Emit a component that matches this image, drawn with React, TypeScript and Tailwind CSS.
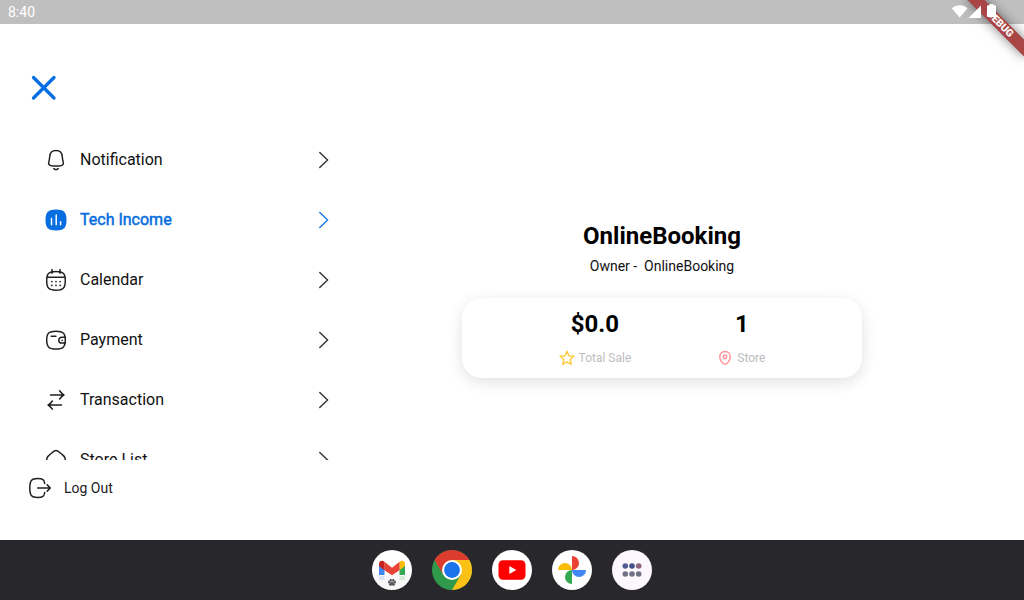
import type { ReactNode } from 'react';

const iconProps = {
  width: 24,
  height: 24,
  viewBox: '0 0 24 24',
  fill: 'none',
  stroke: 'currentColor',
  strokeWidth: 1.5,
  strokeLinecap: 'round' as const,
  strokeLinejoin: 'round' as const,
};

const BellIcon = () => (
  <svg {...iconProps}>
    <path d="M12 2.600C8.200 2.600 5.900 5.300 5.700 8.800c-.1 2.400-.4 3.400-.8 4.600-.4 1.300-.5 2.500.3 3.300 1.100 1.100 3.700 1.400 6.800 1.400s5.700-.3 6.800-1.400c.8-.8.700-2 .3-3.300-.4-1.200-.7-2.200-.8-4.600-.2-3.500-2.500-6.200-6.300-6.200z" />
    <path d="M9.700 20.700c1.200 1 3.400 1 4.600 0" />
  </svg>
);

const ChartIcon = () => (
  <svg {...iconProps}>
    <path
      d="M12 1.500c7.800 0 10.500 2.700 10.500 10.500S19.800 22.500 12 22.500 1.500 19.800 1.500 12 4.200 1.500 12 1.500z"
      fill="currentColor"
      stroke="none"
    />
    <path d="M7.500 10.400v6.400M12.200 7v9.800M16.600 13.800v3" stroke="white" strokeWidth={1.5} />
  </svg>
);

const CalendarIcon = () => (
  <svg {...iconProps}>
    <path d="M12 3.400c7 0 9.300 2 9.300 9.300S19 22.200 12 22.200s-9.300-2-9.300-9.500S5 3.400 12 3.400z" />
    <path d="M3 9.300h18M8 1.600v3.600M16 1.600v3.600" />
    <path d="M7.900 13.600h.01M12 13.600h.01M16.100 13.600h.01M7.900 17.400h.01M12 17.400h.01M16.100 17.400h.01" strokeWidth={1.7} />
  </svg>
);

const WalletIcon = () => (
  <svg {...iconProps}>
    <path d="M12 3.200c7 0 9.300 1.900 9.300 8.900S19 21 12 21s-9.300-1.900-9.300-8.900S5 3.200 12 3.200z" />
    <path d="M21.300 9.300h-3.600a2.900 2.900 0 0 0 0 5.800h3.600M18 12.200h.3M7.200 8.300h4.700" />
  </svg>
);

const SwapIcon = () => (
  <svg {...iconProps}>
    <path d="M6.500 7h13.300M15.600 2.800c1.200 1.700 2.600 3.200 4.300 4.200-1.700.9-3.100 2.300-4.300 4" />
    <path d="M17.500 17H4.200M8.400 13c-1.200 1.700-2.600 3.100-4.300 4 1.700 1 3.100 2.400 4.300 4.200" />
  </svg>
);

const HomeIcon = () => (
  <svg {...iconProps}>
    <path d="M2.700 12.700c0-3.200.4-3.800 3-6 1.800-1.500 4.400-4.200 6.300-4.200s4.500 2.700 6.300 4.200c2.600 2.200 3 2.800 3 6 0 7-1.700 8.800-9.300 8.800s-9.300-1.800-9.300-8.800z" />
  </svg>
);

const LogoutIcon = () => (
  <svg {...iconProps}>
    <path d="M16.700 7.500c-.4-3.800-1.900-5-7-5-6.200 0-7.900 1.900-7.900 9.500s1.700 9.500 7.900 9.500c5.100 0 6.600-1.200 7-5" />
    <path d="M9.700 12h12.600M19.200 8.900l3.100 3.100-3.100 3.100" />
  </svg>
);

const Chevron = () => (
  <svg {...iconProps} strokeOpacity={0.9}>
    <path d="M7.800 4.500l7.800 7.500-7.800 7.500" />
  </svg>
);

const menuItems = [
  { label: 'Notification', icon: <BellIcon /> },
  { label: 'Tech Income', icon: <ChartIcon />, active: true },
  { label: 'Calendar', icon: <CalendarIcon /> },
  { label: 'Payment', icon: <WalletIcon /> },
  { label: 'Transaction', icon: <SwapIcon /> },
  { label: 'Store List', icon: <HomeIcon /> },
];

const StatusBar = () => (
  <div className="flex h-6 shrink-0 items-center justify-between bg-[#bfbfbf] pl-2 pr-[27px] text-sm text-white">
    <span>8:40</span>
    <svg className="relative z-20" width="46" height="24" viewBox="0 0 46 24" fill="white">
      <path d="M0.800 8.300C5.200 4.100 12.200 4.100 16.500 8.300L8.700 17.500z" />
      <path d="M30 5.500V18H17.500z" />
      <path d="M38.500 4h4v1.200h1.600a.9.900 0 0 1 .9.900v10a.9.900 0 0 1-.9.900h-7.200a.9.900 0 0 1-.9-.9v-10a.9.900 0 0 1 .9-.9h1.600z" />
    </svg>
  </div>
);

const DebugBanner = () => (
  <div className="absolute right-0 top-0 z-10 h-24 w-24 overflow-hidden">
    <div className="absolute left-[32px] top-[18px] flex h-3 w-20 rotate-45 items-center justify-center bg-[#a94546] text-[10.2px] font-black leading-3 text-white shadow-[0_0_12px_rgba(0,0,0,0.5)]">
      DEBUG
    </div>
  </div>
);

const Stat = ({ value, label, icon }: { value: string; label: string; icon: ReactNode }) => (
  <div className="flex flex-col items-center">
    <span className="text-2xl font-bold leading-7">{value}</span>
    <div className="mt-3 flex h-4 items-center gap-1 text-xs text-[#bdbdbd]">
      {icon}
      <span>{label}</span>
    </div>
  </div>
);

const DockIcon = ({ children }: { children: ReactNode }) => (
  <svg width="40" height="40" viewBox="0 0 40 40">
    {children}
  </svg>
);

const Dock = () => (
  <div className="flex h-[60px] shrink-0 items-center justify-center gap-5 bg-[#28272c]">
    <DockIcon>
      <circle cx="20" cy="20" r="20" fill="white" />
      <path d="M1 25h38a20 20 0 0 1-38 0z" fill="#f8f8f9" />
      <path d="M7 26h5.500v4H7z" fill="#dce6f8" />
      <path d="M27.500 26H33v4h-5.500z" fill="#d8ebdd" />
      <path d="M7 13.500l5.500 4V25H7z" fill="#4285f4" />
      <path d="M27.500 17.500l5.500-4V25h-5.500z" fill="#34a853" />
      <path d="M27.500 11.700c2.100-1.900 5.500-.9 5.500 2v2.300l-5.500 4.200z" fill="#fbbc04" />
      <path d="M12.500 11.700l7.500 6 7.500-6v8.500l-7.500 5-7.500-5z" fill="#ea4335" />
      <path d="M7 16v-2.300c0-2.900 3.400-3.900 5.500-2v8.500z" fill="#c5221f" />
      <g fill="#55565a">
        <ellipse cx="17.100" cy="32" rx="1.100" ry="1.500" />
        <ellipse cx="18.800" cy="30.300" rx="1.100" ry="1.500" />
        <ellipse cx="21.200" cy="30.300" rx="1.100" ry="1.500" />
        <ellipse cx="22.900" cy="32" rx="1.100" ry="1.500" />
        <path d="M20 32c1.600 0 3.100 1.700 2.900 3-.2 1.200-1.700.6-2.900.6s-2.700.6-2.900-.6c-.2-1.300 1.300-3 2.900-3z" />
      </g>
    </DockIcon>
    <DockIcon>
      <circle cx="20" cy="20" r="20" fill="#2f9a4b" />
      <path d="M20 10h17.320A20 20 0 0 1 20 40l8.660-15z" fill="#fbc116" />
      <path d="M2.680 10A20 20 0 0 1 37.320 10H20L11.340 25z" fill="#dc3b2e" />
      <circle cx="20" cy="20" r="10" fill="white" />
      <circle cx="20" cy="20" r="7.900" fill="#1a73e8" />
    </DockIcon>
    <DockIcon>
      <circle cx="20" cy="20" r="20" fill="white" />
      <rect x="6.500" y="10.300" width="27" height="19.400" rx="4.500" fill="#ff0000" />
      <path d="M17.300 16v8l7-4z" fill="white" />
    </DockIcon>
    <DockIcon>
      <circle cx="20" cy="20" r="20" fill="white" />
      <path d="M20 6a7 7 0 0 1 0 14z" fill="#ea4335" />
      <path d="M34 20a7 7 0 0 1-14 0z" fill="#4285f4" />
      <path d="M20 34a7 7 0 0 1 0-14z" fill="#34a853" />
      <path d="M6 20a7 7 0 0 1 14 0z" fill="#fbbc04" />
    </DockIcon>
    <DockIcon>
      <circle cx="20" cy="20" r="20" fill="#fcf7fd" />
      <circle cx="13.300" cy="16" r="2.800" fill="#4f5b92" />
      <circle cx="20" cy="16" r="2.800" fill="#434f88" />
      <circle cx="26.700" cy="16" r="2.800" fill="#8b6480" />
      <circle cx="13.300" cy="24" r="2.800" fill="#6f7285" />
      <circle cx="20" cy="24" r="2.800" fill="#6f7285" />
      <circle cx="26.700" cy="24" r="2.800" fill="#6f7285" />
    </DockIcon>
  </div>
);

export default function App() {
  return (
    <div className="relative flex h-[600px] w-[1024px] flex-col overflow-hidden bg-white font-[Roboto,sans-serif] text-black">
      <StatusBar />
      <DebugBanner />

      <div className="flex flex-1">
        <div className="flex w-[344px] flex-col">
          <button className="ml-7 mt-12 w-8 text-[#066ee0]">
            <svg width="32" height="32" viewBox="0 0 32 32" stroke="currentColor" strokeWidth="3.300" strokeLinecap="round">
              <path d="M5.500 5.500l20.500 20.500M26 5.500l-20.500 20.500" />
            </svg>
          </button>

          <div className="mt-[26px] h-[330px] overflow-hidden pl-11 pr-2">
            {menuItems.map((item) => (
              <div
                key={item.label}
                className={`flex h-[60px] items-center ${item.active ? 'text-[#066ee0]' : 'text-[#212121]'}`}
              >
                {item.icon}
                <span className={`ml-3 flex-1 ${item.active ? '[-webkit-text-stroke:0.5px_currentColor]' : 'text-[#111111]'}`}>
                  {item.label}
                </span>
                <Chevron />
              </div>
            ))}
          </div>

          <div className="mt-4 flex h-6 items-center gap-3 pl-7 text-sm text-[#212121]">
            <LogoutIcon />
            <span>Log Out</span>
          </div>
        </div>

        <div className="flex flex-1 flex-col items-center pr-11 pt-[198px]">
          <h1 className="text-2xl font-bold leading-7">OnlineBooking</h1>
          <p className="mt-1.5 whitespace-pre text-sm leading-5 text-[#111111]">Owner -  OnlineBooking</p>
          <div className="mt-[22px] flex h-20 w-[400px] justify-center gap-[87px] rounded-[20px] bg-white pt-3 shadow-[0_4px_15px_rgba(0,0,0,0.12)]">
            <Stat
              value="$0.0"
              label="Total Sale"
              icon={
                <svg width="16" height="16" viewBox="0 0 16 16" fill="none" stroke="#ffca3a" strokeWidth="1.400" strokeLinejoin="round">
                  <path d="M8 1.300l1.900 4.500 5 .4-3.800 3.300 1.200 4.900L8 11.800l-4.300 2.600 1.200-4.900L1.100 6.200l5-.4z" />
                </svg>
              }
            />
            <Stat
              value="1"
              label="Store"
              icon={
                <svg width="15" height="16" viewBox="0 0 15 16" fill="none" stroke="#ff8f94" strokeWidth="1.400">
                  <path d="M7 1.500c3 0 5.200 2.300 5.200 5.200 0 3.800-3.100 7.400-5.200 7.400S1.800 10.500 1.800 6.700C1.800 3.800 4 1.500 7 1.500z" />
                  <circle cx="7" cy="7" r="1.700" />
                </svg>
              }
            />
          </div>
        </div>
      </div>

      <Dock />
    </div>
  );
}
